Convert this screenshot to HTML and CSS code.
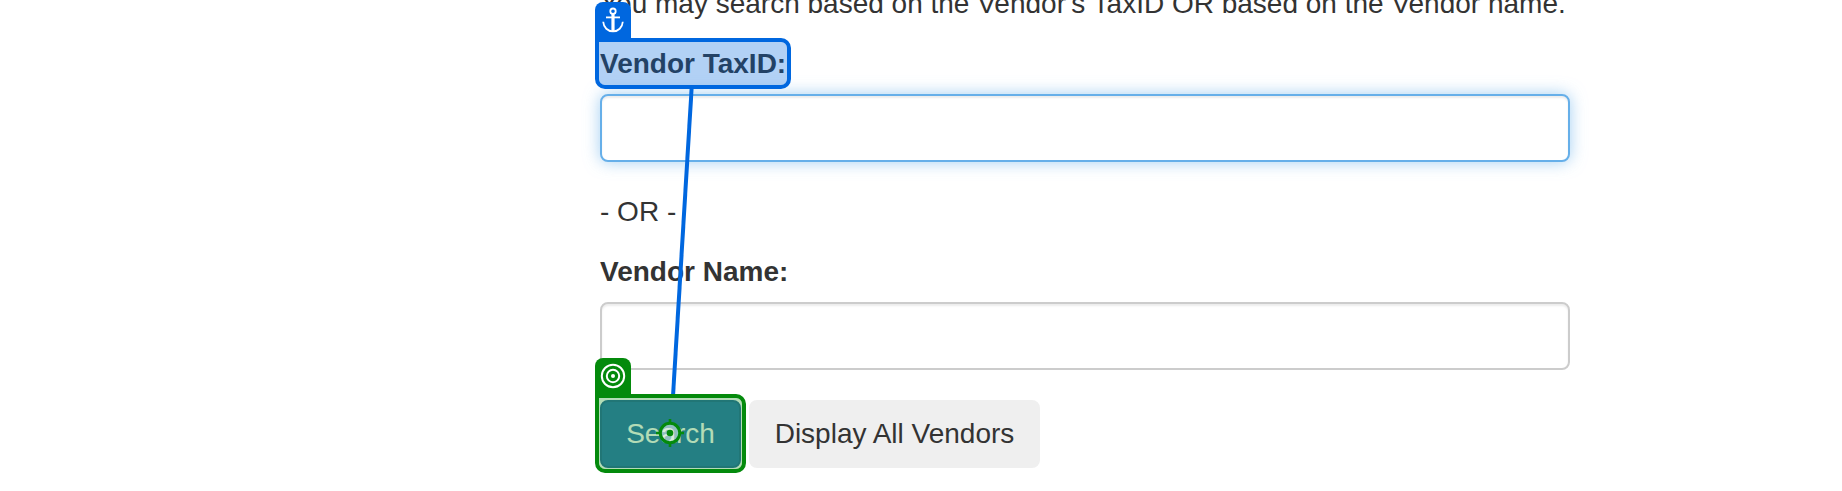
FILE: index.html
```html
<!DOCTYPE html>
<html lang="en">
<head>
<meta charset="utf-8">
<title>Vendor Search</title>
<link rel="stylesheet" href="styles.css">
</head>
<body>
<main class="form">
  <p class="intro">You may search based on the Vendor's TaxID OR based on the Vendor name.</p>
  <label class="label" for="taxid">Vendor TaxID:</label>
  <input class="input input-focused" id="taxid" type="text">
  <p class="divider">- OR -</p>
  <label class="label" for="name">Vendor Name:</label>
  <input class="input" id="name" type="text">
  <div class="actions">
    <button class="btn btn-primary" type="button">Search</button>
    <button class="btn btn-default" type="button">Display All Vendors</button>
  </div>
</main>

<svg class="connector" width="1842" height="491" viewBox="0 0 1842 491">
  <line x1="691.7" y1="87" x2="673" y2="396" stroke="#0067df" stroke-width="4"/>
</svg>
<div class="highlight anchor-box"></div>
<div class="tab anchor-tab">
  <svg width="36" height="36" viewBox="0 0 36 36" fill="none" stroke="#fff" stroke-width="1.8">
    <circle cx="18" cy="9.200" r="2.700"/>
    <path d="M18 12v18" stroke-width="3.200"/>
    <path d="M11 15.400h14"/>
    <path d="M8.200 19.800c.4 5.700 4.600 9.600 9.800 9.600s9.400-3.900 9.800-9.600"/>
  </svg>
</div>
<div class="highlight target-box"></div>
<div class="tab target-tab">
  <svg width="36" height="36" viewBox="0 0 36 36" fill="none" stroke="#fff" stroke-width="2">
    <circle cx="18" cy="18" r="11.200"/>
    <circle cx="18" cy="18" r="6.200"/>
    <circle cx="18" cy="18" r="2" fill="#fff" stroke="none"/>
  </svg>
</div>
<svg class="crosshair" width="28" height="28" viewBox="0 0 28 28" fill="none" stroke="#048a0c">
  <circle cx="14" cy="14" r="9.700" fill="#fff" fill-opacity=".5" stroke-width="3"/>
  <path d="M14 0v4M14 24v4M0 14h4M24 14h4" stroke-width="2.600"/>
  <circle cx="14" cy="14" r="3.300" fill="#048a0c" stroke="none"/>
</svg>
</body>
</html>
```
FILE: styles.css
```css
* { box-sizing: border-box; }

body {
  margin: 0;
  height: 491px;
  overflow: hidden;
  background: #fff;
  color: #333;
  font: 28px/40px "Liberation Sans", Arial, sans-serif;
}

.form {
  display: flex;
  flex-direction: column;
  width: 970px;
  margin: -16px 0 0 600px;
}

.intro { margin: 0 0 20px; white-space: nowrap; }

.label { margin-bottom: 10px; font-weight: 700; }

.input {
  height: 68px;
  margin: 0 0 30px;
  padding: 12px 24px;
  border: 2px solid #ccc;
  border-radius: 8px;
  outline: none;
  background: #fff;
  box-shadow: inset 0 2px 2px rgba(0, 0, 0, .075);
  font: inherit;
}

.input-focused {
  border-color: #66afe9;
  box-shadow: inset 0 2px 2px rgba(0, 0, 0, .075), 0 0 16px rgba(102, 175, 233, .6);
}

.divider { margin: 0 0 20px; }

.actions { display: flex; gap: 8px; }

.btn {
  height: 68px;
  padding: 0;
  border: 2px solid transparent;
  border-radius: 8px;
  font: inherit;
}

.btn-primary {
  width: 141px;
  border-color: #2e6da4;
  background: #337ab7;
  color: #fff;
}

.btn-default {
  width: 291px;
  border-color: #efefef;
  background: #efefef;
  color: #333;
}

/* Annotations laid over the form */
.connector { position: absolute; left: 0; top: 0; }

.highlight {
  position: absolute;
  left: 595px;
  border: 4px solid;
  border-radius: 0 10px 10px 10px;
}

.anchor-box {
  top: 38px;
  width: 196px;
  height: 51px;
  border-color: #0067df;
  background: rgba(0, 103, 223, .3);
  background-clip: padding-box;
}

.target-box {
  top: 394px;
  width: 151px;
  height: 79px;
  border-color: #048a0c;
  background: rgba(4, 138, 12, .3);
  background-clip: padding-box;
}

.tab {
  position: absolute;
  left: 595px;
  width: 36px;
  height: 36px;
  border-radius: 8px 8px 0 0;
}

.tab svg { display: block; }

.anchor-tab { top: 2px; background: #0067df; }

.target-tab { top: 358px; background: #048a0c; }

.crosshair { position: absolute; left: 656px; top: 419px; }
```
